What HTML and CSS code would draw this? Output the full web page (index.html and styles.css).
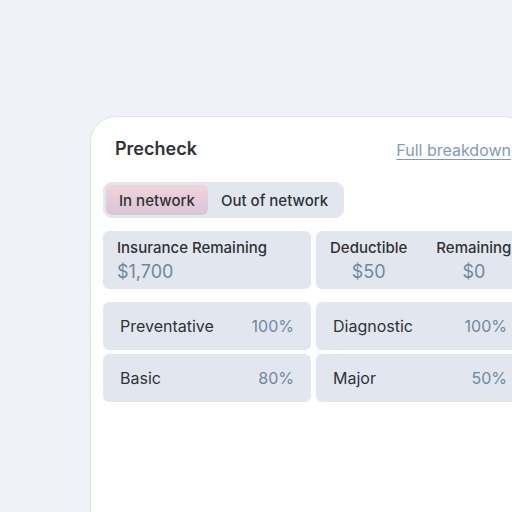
FILE: index.html
```html
<!DOCTYPE html>
<html lang="en">
<head>
<meta charset="utf-8">
<title>Precheck</title>
<link rel="stylesheet" href="styles.css">
</head>
<body>
<div class="card">
  <div class="header">
    <h1 class="title">Precheck</h1>
    <a class="link" href="#">Full breakdown</a>
  </div>
  <div class="toggle">
    <button class="tab active">In network</button>
    <button class="tab">Out of network</button>
  </div>
  <div class="grid">
    <div class="tile summary">
      <div class="label">Insurance Remaining</div>
      <div class="value">$1,700</div>
    </div>
    <div class="tile summary split">
      <div class="col">
        <div class="label">Deductible</div>
        <div class="value">$50</div>
      </div>
      <div class="col">
        <div class="label">Remaining</div>
        <div class="value">$0</div>
      </div>
    </div>
    <div class="tile row first">
      <span class="name">Preventative</span><span class="pct">100%</span>
    </div>
    <div class="tile row first">
      <span class="name">Diagnostic</span><span class="pct">100%</span>
    </div>
    <div class="tile row">
      <span class="name">Basic</span><span class="pct">80%</span>
    </div>
    <div class="tile row">
      <span class="name">Major</span><span class="pct">50%</span>
    </div>
  </div>
</div>
</body>
</html>
```

FILE: styles.css
```css
html, body {
  margin: 0;
  padding: 0;
  height: 100%;
  overflow: hidden;
}
body {
  background: #eff2f7;
  font-family: Inter, "Noto Sans", sans-serif;
  color: #2f3237;
}
.card {
  box-sizing: border-box;
  margin: 116px 0 0 90px;
  width: 440px;
  height: 420px;
  background: #fff;
  border: 1px solid #dfe2e7;
  border-radius: 26px;
  padding: 0 0 0 12px;
}
.header {
  display: flex;
  justify-content: space-between;
  align-items: center;
  padding: 19px 18px 0 12px;
}
.title {
  margin: 0;
  font-size: 18px;
  font-weight: 600;
  line-height: 22px;
  color: #2f3237;
}
.link {
  font-size: 16px;
  line-height: 22px;
  margin-top: 3px;
  color: #7f9bbd;
  text-decoration: underline;
  text-underline-offset: 3px;
  text-decoration-thickness: 1px;
}
.toggle {
  display: inline-flex;
  margin-top: 21px;
  padding: 3px;
  background: #e2e7ef;
  border-radius: 9px;
}
.tab {
  font-family: inherit;
  font-size: 15px;
  font-weight: 500;
  color: #2f3237;
  border: none;
  background: transparent;
  height: 30px;
  padding: 0 13px;
  border-radius: 6px;
}
.active {
  background: linear-gradient(180deg, #efd4db 0%, #d9c6d6 100%);
}
.grid {
  display: grid;
  grid-template-columns: 208px 208px;
  column-gap: 5px;
  row-gap: 4px;
  margin-top: 13px;
}
.tile {
  background: #e2e7ef;
  border-radius: 6px;
}
.summary {
  box-sizing: border-box;
  height: 58px;
  padding: 8px 14px;
  margin-bottom: 9px;
}
.label {
  font-size: 15px;
  font-weight: 500;
  line-height: 18px;
}
.value {
  margin-top: 3px;
  font-size: 18px;
  line-height: 24px;
  color: #6f88a3;
}
.split {
  display: flex;
  gap: 29px;
}
.col {
  text-align: center;
}
.row {
  display: flex;
  justify-content: space-between;
  align-items: center;
  height: 48px;
  padding: 0 17px;
  font-size: 16px;
}
.pct {
  color: #6f88a3;
}
```
